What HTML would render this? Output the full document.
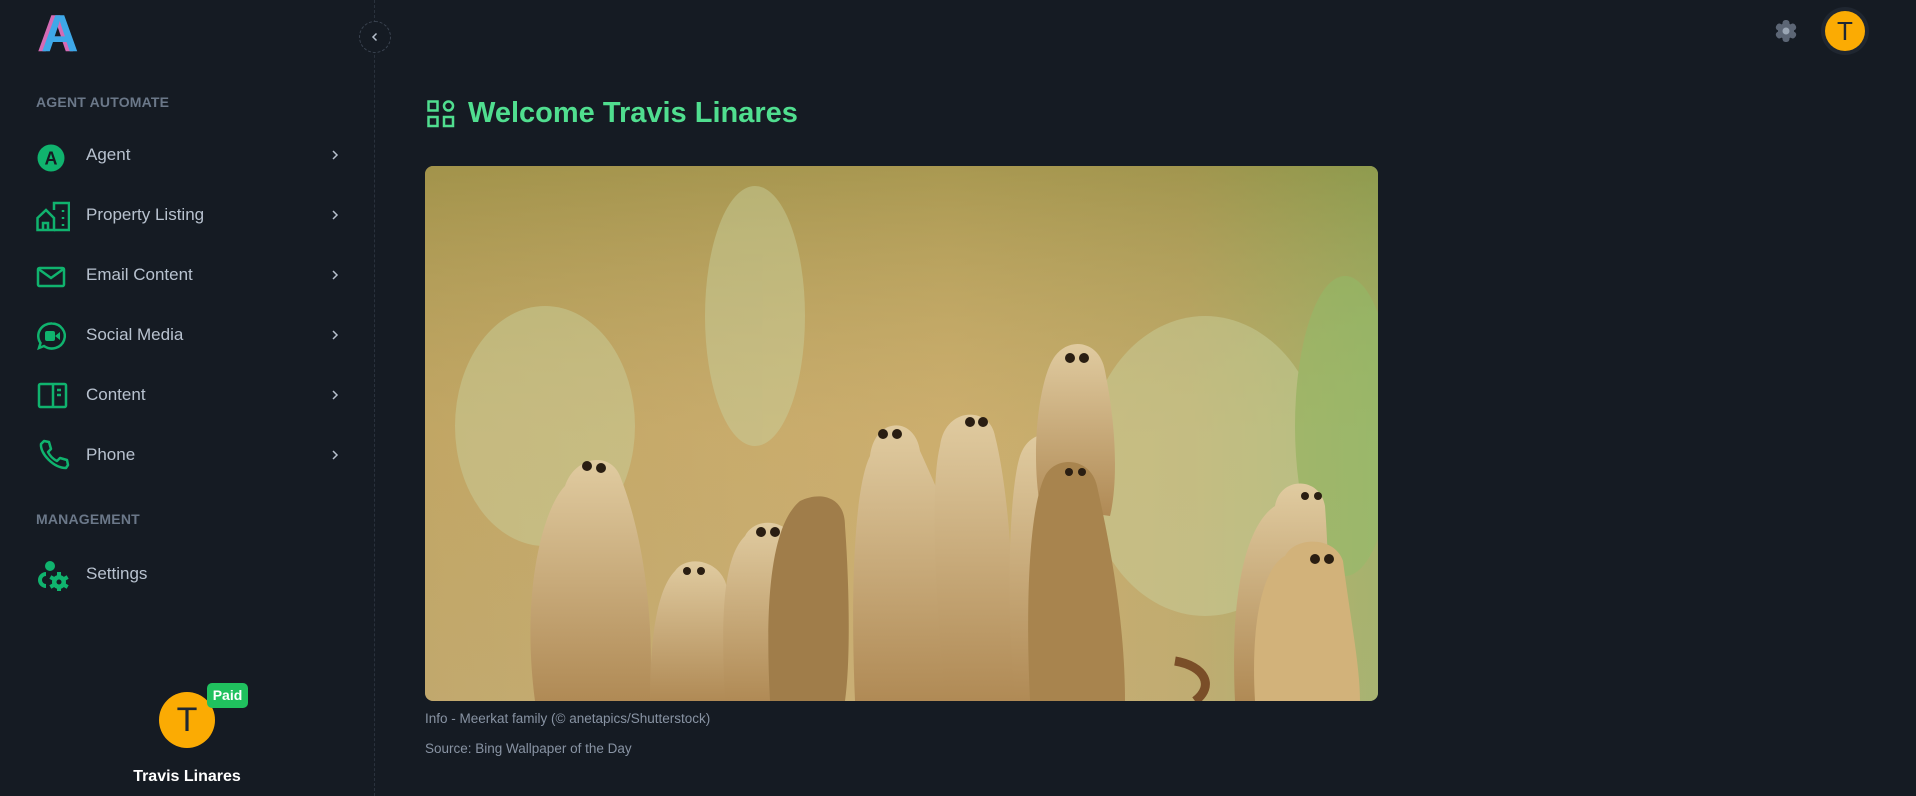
<!DOCTYPE html>
<html><head><meta charset="utf-8"><style>
*{margin:0;padding:0;box-sizing:border-box}
body{width:1916px;height:796px;background:#151b23;font-family:"Liberation Sans",sans-serif;position:relative;overflow:hidden;color:#b6bfcc}
.abs{position:absolute}
.sec{position:absolute;left:36px;font-size:14px;font-weight:bold;color:#6b7889;letter-spacing:.2px}
.item{position:absolute;left:36px;width:306px;height:40px;display:flex;align-items:center}
.item svg.ic{width:34px;height:34px;flex:none}
.item span{margin-left:16px;font-size:17px;color:#b8c2cf}
.item .chev{position:absolute;right:0;top:13px;width:14px;height:14px}
</style></head><body>
<div class="abs" style="left:37px;top:8px;font-size:52px;font-weight:bold;color:#d46bb5;line-height:52px">A</div>
<div class="abs" style="left:41px;top:8px;font-size:52px;font-weight:bold;color:#3ea8e8;line-height:52px">A</div>
<div class="abs" style="left:374px;top:0;width:0;height:796px;border-left:1px dashed #2a323d"></div>
<div class="abs" style="left:359px;top:21px;width:32px;height:32px;border-radius:50%;border:1px dashed #3a4350;background:#151b23"></div>
<svg class="abs" style="left:369px;top:31px" width="12" height="12" viewBox="0 0 12 12"><path d="M7.5 2.5 4 6l3.5 3.5" fill="none" stroke="#b6bfcc" stroke-width="1.5"/></svg>

<div class="sec" style="top:94px">AGENT AUTOMATE</div>
<div class="item" style="top:135px"><svg class="ic" viewBox="0 0 34 34"><circle cx="15" cy="20" r="13.5" fill="#10b36e"/><text x="15" y="26.5" text-anchor="middle" font-family="Liberation Sans" font-weight="bold" font-size="18" fill="#151b23">A</text></svg><span>Agent</span><svg class="chev" viewBox="0 0 14 14"><path d="M5 3l4 4-4 4" fill="none" stroke="#b6bfcc" stroke-width="1.5"/></svg></div>
<div class="item" style="top:195px"><svg class="ic" viewBox="0 0 34 34"><g fill="none" stroke="#10b36e" stroke-width="2.5"><path d="M1.5 32V20L10 12l8 8v12z"/><path d="M7 32v-7h5v7"/><path d="M18 12V5h15v27H18"/><path d="M27 12v2M27 19v2M27 26v2"/></g></svg><span>Property Listing</span><svg class="chev" viewBox="0 0 14 14"><path d="M5 3l4 4-4 4" fill="none" stroke="#b6bfcc" stroke-width="1.5"/></svg></div>
<div class="item" style="top:255px"><svg class="ic" viewBox="0 0 34 34"><g fill="none" stroke="#10b36e" stroke-width="2.5"><rect x="2" y="10" width="26" height="18" rx="1.5"/><path d="M2.5 11 15 20l12.5-9"/></g></svg><span>Email Content</span><svg class="chev" viewBox="0 0 14 14"><path d="M5 3l4 4-4 4" fill="none" stroke="#b6bfcc" stroke-width="1.5"/></svg></div>
<div class="item" style="top:315px"><svg class="ic" viewBox="0 0 34 34"><path d="M16 5.5a13 12.5 0 1 1-8 22.5L3 30l1.5-5A13 12.5 0 0 1 16 5.5z" fill="none" stroke="#10b36e" stroke-width="2.5"/><rect x="9" y="13" width="10" height="10" rx="2" fill="#10b36e"/><path d="M19 18l5-4v8z" fill="#10b36e"/></svg><span>Social Media</span><svg class="chev" viewBox="0 0 14 14"><path d="M5 3l4 4-4 4" fill="none" stroke="#b6bfcc" stroke-width="1.5"/></svg></div>
<div class="item" style="top:375px"><svg class="ic" viewBox="0 0 34 34"><g fill="none" stroke="#10b36e" stroke-width="2.5"><rect x="3" y="6" width="27" height="23" rx="1.5"/><path d="M17 6v23M21 12h4M21 17h4"/></g></svg><span>Content</span><svg class="chev" viewBox="0 0 14 14"><path d="M5 3l4 4-4 4" fill="none" stroke="#b6bfcc" stroke-width="1.5"/></svg></div>
<div class="item" style="top:435px"><svg class="ic" viewBox="0 0 34 34"><path d="M8 3l5 1 2 7-3 3c2 4 5 7 9 9l3-3 7 2 1 5-2 3C18 30 4 16 5 6z" fill="none" stroke="#10b36e" stroke-width="2.5" stroke-linejoin="round"/></svg><span>Phone</span><svg class="chev" viewBox="0 0 14 14"><path d="M5 3l4 4-4 4" fill="none" stroke="#b6bfcc" stroke-width="1.5"/></svg></div>
<div class="sec" style="top:511px">MANAGEMENT</div>
<div class="item" style="top:554px"><svg class="ic" viewBox="0 0 34 34"><circle cx="14" cy="9" r="5" fill="#10b36e"/><path d="M10 17a6 6 0 0 0 0 12" fill="none" stroke="#10b36e" stroke-width="4"/><g transform="translate(23,25)"><circle r="7" fill="#10b36e"/><g fill="#10b36e"><rect x="-2" y="-10" width="4" height="20"/><rect x="-2" y="-10" width="4" height="20" transform="rotate(60)"/><rect x="-2" y="-10" width="4" height="20" transform="rotate(120)"/></g><circle r="2.5" fill="#151b23"/></g></svg><span>Settings</span></div>

<div class="abs" style="left:159px;top:692px;width:56px;height:56px;border-radius:50%;background:#fbab03;color:#1f2833;font-size:34px;text-align:center;line-height:56px">T</div>
<div class="abs" style="left:207px;top:683px;width:41px;height:25px;border-radius:5px;background:#20c15e;color:#fff;font-size:14px;font-weight:bold;text-align:center;line-height:25px">Paid</div>
<div class="abs" style="left:87px;top:768px;width:200px;text-align:center;color:#fff;font-size:16px;font-weight:bold">Travis Linares</div>

<svg class="abs" style="left:1773px;top:18px" width="26" height="26" viewBox="0 0 26 26"><g fill="#5c6675" transform="translate(13,13)"><circle r="8"/><rect x="-3.5" y="-11" width="7" height="22" rx="3"/><rect x="-3.5" y="-11" width="7" height="22" rx="3" transform="rotate(60)"/><rect x="-3.5" y="-11" width="7" height="22" rx="3" transform="rotate(120)"/></g><circle cx="13" cy="13" r="3.5" fill="#9aa6b4"/></svg>
<div class="abs" style="left:1821px;top:7px;width:48px;height:48px;border-radius:50%;background:#1f2630"></div>
<div class="abs" style="left:1825px;top:11px;width:40px;height:40px;border-radius:50%;background:#fbab03;color:#1f2833;font-size:26px;text-align:center;line-height:40px">T</div>

<svg class="abs" style="left:427px;top:100px" width="28" height="28" viewBox="0 0 28 28"><g fill="none" stroke="#50de8f" stroke-width="2.5"><rect x="1.5" y="1.5" width="9" height="9"/><circle cx="21.5" cy="6" r="4.5"/><rect x="1.5" y="17" width="9" height="9"/><rect x="17" y="17" width="9" height="9"/></g></svg>
<div class="abs" style="left:468px;top:97px;font-size:29px;font-weight:bold;color:#50de8f">Welcome Travis Linares</div>

<div class="abs" style="left:425px;top:166px;width:953px;height:535px;border-radius:8px;overflow:hidden;background:linear-gradient(90deg,#b99e5a 0%,#c2a564 30%,#c9aa68 55%,#b8a462 80%,#8eb062 100%)">
<svg width="953" height="535" viewBox="0 0 953 535">
<defs><linearGradient id="bg" x1="0" y1="0" x2="0" y2="1"><stop offset="0" stop-color="#8f8a3e" stop-opacity=".55"/><stop offset=".5" stop-color="#d4b87c" stop-opacity=".3"/><stop offset="1" stop-color="#cdb88a" stop-opacity=".4"/></linearGradient>
<linearGradient id="mk" x1="0" y1="0" x2="0" y2="1"><stop offset="0" stop-color="#e0cba0"/><stop offset="1" stop-color="#b08a55"/></linearGradient></defs>
<rect width="953" height="535" fill="url(#bg)"/>
<g fill="#c9d2a0" opacity=".45"><ellipse cx="120" cy="260" rx="90" ry="120"/><ellipse cx="330" cy="150" rx="50" ry="130"/><ellipse cx="780" cy="300" rx="120" ry="150"/><ellipse cx="920" cy="260" rx="50" ry="150" fill="#8fbf6a"/></g>
<g fill="url(#mk)">
<path d="M110 535 C95 420 120 340 140 320 C150 290 185 285 195 310 C215 360 230 440 225 535Z"/>
<path d="M225 535 C225 460 235 420 250 405 C260 390 290 392 300 415 C315 460 320 500 320 535Z"/>
<path d="M300 535 C295 440 300 390 320 370 C330 350 365 352 372 380 C380 430 380 490 378 535Z"/>
<path d="M345 535 C340 440 345 360 375 335 C395 325 420 330 420 360 C425 430 425 500 420 535Z" fill="#a07d4a"/>
<path d="M430 535 C425 420 430 320 445 290 C450 250 490 250 495 285 C520 340 560 430 570 535Z"/>
<path d="M520 535 C510 430 505 320 515 280 C520 240 565 240 570 270 C585 330 590 430 590 535Z"/>
<path d="M590 535 C580 430 585 320 595 290 C605 260 640 262 645 290 C660 360 660 450 655 535Z"/>
<path d="M615 340 C605 280 615 210 630 190 C645 170 675 175 680 205 C695 280 690 330 685 350Z"/>
<path d="M605 535 C600 430 605 340 620 310 C630 290 665 290 672 320 C690 400 700 470 700 535Z" fill="#a8844e"/>
<path d="M810 535 C805 430 820 360 850 340 C855 310 895 310 900 340 C905 410 905 480 900 535Z"/>
<path d="M830 535 C825 450 840 400 860 390 C870 370 910 370 918 395 C925 450 935 500 935 535Z" fill="#d2b27a"/>
</g>
<g fill="#2a1e12"><circle cx="162" cy="300" r="5"/><circle cx="176" cy="302" r="5"/><circle cx="262" cy="405" r="4"/><circle cx="276" cy="405" r="4"/><circle cx="336" cy="366" r="5"/><circle cx="350" cy="366" r="5"/><circle cx="458" cy="268" r="5"/><circle cx="472" cy="268" r="5"/><circle cx="545" cy="256" r="5"/><circle cx="558" cy="256" r="5"/><circle cx="645" cy="192" r="5"/><circle cx="659" cy="192" r="5"/><circle cx="644" cy="306" r="4"/><circle cx="657" cy="306" r="4"/><circle cx="880" cy="330" r="4"/><circle cx="893" cy="330" r="4"/><circle cx="890" cy="393" r="5"/><circle cx="904" cy="393" r="5"/></g>
<path d="M750 495 C780 500 790 520 770 535" fill="none" stroke="#7a4e28" stroke-width="9"/>
</svg></div>

<div class="abs" style="left:425px;top:711px;font-size:13.5px;color:#8893a3">Info - Meerkat family (© anetapics/Shutterstock)</div>
<div class="abs" style="left:425px;top:741px;font-size:13.5px;color:#8893a3">Source: Bing Wallpaper of the Day</div>
</body></html>
